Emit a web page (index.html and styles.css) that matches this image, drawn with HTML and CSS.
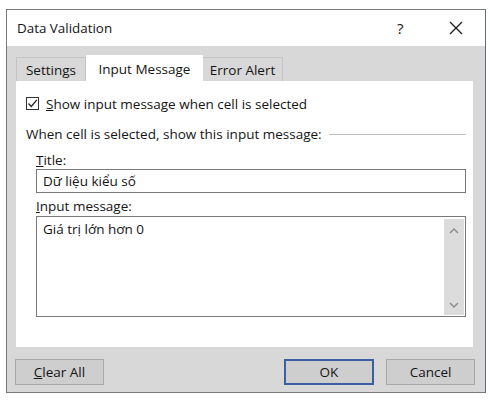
FILE: index.html
```html
<!DOCTYPE html>
<html lang="vi">
<head>
<meta charset="utf-8">
<title>Data Validation</title>
<link rel="stylesheet" href="styles.css">
</head>
<body>
<div class="dialog">
  <div class="titlebar">
    <span class="title">Data Validation</span>
    <span class="help">?</span>
    <span class="close">
      <svg width="14" height="14" viewBox="0 0 14 14"><path d="M1 1 L13 13 M13 1 L1 13" stroke="#222" stroke-width="1.4" fill="none"/></svg>
    </span>
  </div>
  <div class="body">
    <div class="tabs">
      <div class="tab">Settings</div>
      <div class="tab active">Input Message</div>
      <div class="tab">Error Alert</div>
    </div>
    <div class="panel">
      <label class="check-row">
        <span class="checkbox">
          <svg width="11" height="11" viewBox="0 0 11 11"><path d="M1.5 5.5 L4.3 8.5 L9.8 1.8" stroke="#222" stroke-width="1.3" fill="none"/></svg>
        </span>
        <span><u>S</u>how input message when cell is selected</span>
      </label>
      <div class="group-label">
        <span>When cell is selected, show this input message:</span>
        <span class="rule"></span>
      </div>
      <div class="field">
        <div class="field-label"><u>T</u>itle:</div>
        <div class="input">Dữ liệu kiểu số</div>
      </div>
      <div class="field">
        <div class="field-label"><u>I</u>nput message:</div>
        <div class="textarea">
          <div class="textarea-text">Giá trị lớn hơn 0</div>
          <div class="scrollbar">
            <svg width="10" height="6" viewBox="0 0 10 6"><path d="M1 5 L5 1 L9 5" stroke="#8a8a8a" stroke-width="1.4" fill="none"/></svg>
            <svg width="10" height="6" viewBox="0 0 10 6"><path d="M1 1 L5 5 L9 1" stroke="#8a8a8a" stroke-width="1.4" fill="none"/></svg>
          </div>
        </div>
      </div>
    </div>
    <div class="buttons">
      <button class="btn"><u>C</u>lear All</button>
      <span class="spacer"></span>
      <button class="btn default">OK</button>
      <button class="btn">Cancel</button>
    </div>
  </div>
</div>
</body>
</html>
```

FILE: styles.css
```css
* { box-sizing: border-box; }

body {
  margin: 0;
  background: #ffffff;
  font-family: "Open Sans", "Noto Sans", sans-serif;
  font-size: 13.5px;
  color: #141414;
}

.dialog {
  margin: 9px 0 0 6px;
  width: 480px;
  height: 384px;
  border: 1px solid #7a7a7a;
  border-right-color: #5d6b85;
  display: flex;
  flex-direction: column;
  background: #d8d8d8;
}

.titlebar {
  height: 36px;
  background: #ffffff;
  display: flex;
  align-items: center;
  padding-left: 10px;
  flex-shrink: 0;
}

.title {
  font-size: 13.4px;
  flex: 1;
}

.help {
  font-size: 15px;
  width: 52px;
}

.close {
  width: 36px;
  display: flex;
  align-items: center;
}

.body {
  flex: 1;
  display: flex;
  flex-direction: column;
  padding: 9px 12px 7px 9px;
}

.tabs {
  display: flex;
  align-items: flex-end;
  height: 26px;
}

.tab {
  height: 24px;
  padding: 0 6px;
  display: flex;
  align-items: center;
  justify-content: center;
  background: #d8d8d8;
  border: 1px solid #c4c4c4;
  border-bottom: none;
}

.tab:first-child { width: 70px; }
.tab:last-child { width: 80px; border-left: none; }

.tab.active {
  width: 117px;
  height: 27px;
  margin-bottom: -1px;
  background: #ffffff;
  border-color: #ffffff;
  position: relative;
  z-index: 1;
}

.panel {
  height: 266px;
  background: #ffffff;
  padding: 16px 7px 0 10px;
}

.check-row {
  display: flex;
  align-items: center;
  gap: 7px;
  height: 13px;
}

.checkbox {
  width: 13px;
  height: 13px;
  border: 1px solid #333;
  display: flex;
  align-items: center;
  justify-content: center;
}

.group-label {
  display: flex;
  align-items: center;
  margin-top: 16px;
  height: 16px;
  gap: 7px;
}

.rule {
  flex: 1;
  height: 1px;
  background: #bdbdbd;
}

.field {
  padding-left: 10px;
}

.field-label {
  height: 16px;
  line-height: 16px;
}

.group-label + .field .field-label { margin-top: 10px; }

.input {
  margin-top: 1px;
  height: 24px;
  border: 1px solid #7a7a7a;
  padding: 0 6px;
  display: flex;
  align-items: center;
}

.field + .field .field-label { margin-top: 5px; }

.textarea {
  margin-top: 2px;
  height: 101px;
  border: 1px solid #7a7a7a;
  display: flex;
  padding: 2px 1px 1px 0;
}

.textarea-text {
  flex: 1;
  padding: 1px 6px;
}

.scrollbar {
  width: 20px;
  background: #dcdcdc;
  display: flex;
  flex-direction: column;
  justify-content: space-between;
  align-items: center;
  padding: 9px 0 7px;
}

.buttons {
  margin-top: 12px;
  display: flex;
  gap: 12px;
  margin-right: -2px;
  margin-left: -1px;
}

.spacer { flex: 1; }

.btn {
  width: 89px;
  height: 26px;
  font-family: inherit;
  font-size: 13.5px;
  color: #141414;
  background: #cecece;
  border: 1px solid #a8a8a8;
  padding: 0;
}

.btn.default {
  width: 90px;
  border: 2px solid #3c5fa3;
}
```
